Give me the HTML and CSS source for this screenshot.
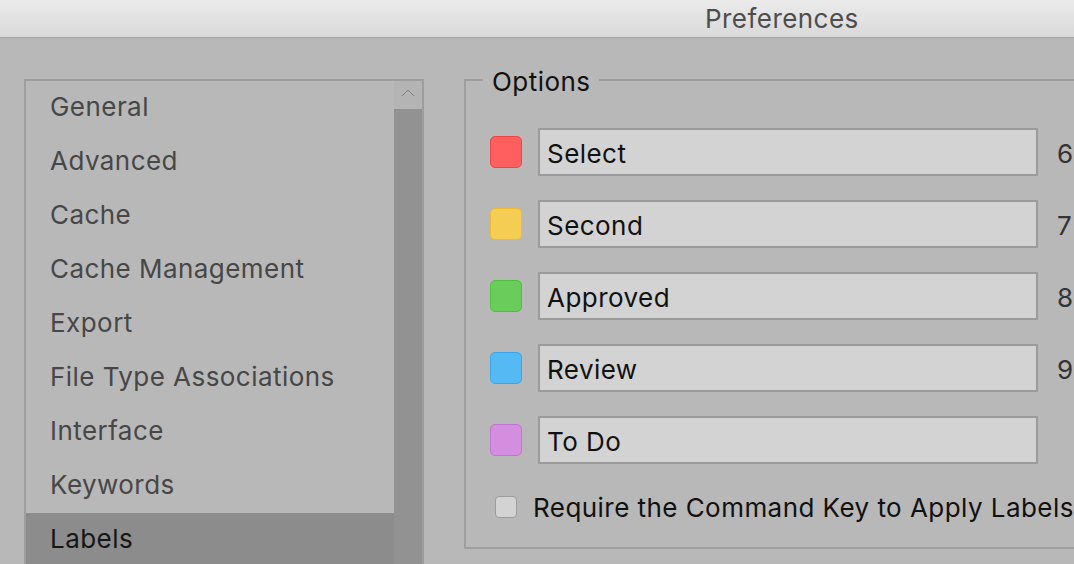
FILE: index.html
```html
<!DOCTYPE html>
<html>
<head>
<meta charset="utf-8">
<title>Preferences</title>
<link rel="stylesheet" href="styles.css">
</head>
<body>
<div class="window">
  <div class="titlebar"><span class="title">Preferences</span></div>
  <div class="content">
    <div class="listbox">
      <ul class="list">
        <li>General</li>
        <li>Advanced</li>
        <li>Cache</li>
        <li>Cache Management</li>
        <li>Export</li>
        <li>File Type Associations</li>
        <li>Interface</li>
        <li>Keywords</li>
        <li class="selected">Labels</li>
      </ul>
      <div class="scrollbar">
        <div class="scroll-up">
          <svg width="14" height="8" viewBox="0 0 14 8"><path d="M1 7 L7 1 L13 7" fill="none" stroke="#7a7a7a" stroke-width="1"/></svg>
        </div>
        <div class="scroll-track"></div>
      </div>
    </div>
    <fieldset class="options">
      <legend>Options</legend>
      <div class="rows">
        <div class="row">
          <span class="swatch red"></span>
          <div class="field">Select</div>
          <span class="key">6</span>
        </div>
        <div class="row">
          <span class="swatch yellow"></span>
          <div class="field">Second</div>
          <span class="key">7</span>
        </div>
        <div class="row">
          <span class="swatch green"></span>
          <div class="field">Approved</div>
          <span class="key">8</span>
        </div>
        <div class="row">
          <span class="swatch blue"></span>
          <div class="field">Review</div>
          <span class="key">9</span>
        </div>
        <div class="row">
          <span class="swatch purple"></span>
          <div class="field">To Do</div>
          <span class="key"></span>
        </div>
        <div class="check-row">
          <span class="checkbox"></span>
          <span class="check-label">Require the Command Key to Apply Labels</span>
        </div>
      </div>
    </fieldset>
  </div>
</div>
</body>
</html>
```

FILE: styles.css
```css
html, body {
  margin: 0;
  padding: 0;
}
body {
  width: 1074px;
  height: 564px;
  overflow: hidden;
  background: #b8b8b8;
  font-family: Inter, "Noto Sans", sans-serif;
  font-size: 26px;
  letter-spacing: 0.45px;
}
.window {
  width: 1074px;
  height: 564px;
  overflow: hidden;
}
.titlebar {
  height: 37px;
  background: linear-gradient(#ebebeb, #d9d9d9);
  border-bottom: 1px solid #a6a6a6;
  display: flex;
  align-items: center;
  padding-left: 705px;
  white-space: nowrap;
}
.title {
  color: #4d4d4d;
  font-size: 26px;
  line-height: 30px;
}
.content {
  display: flex;
  align-items: flex-start;
  padding: 41px 0 0 24px;
  gap: 40px;
}
.listbox {
  width: 396px;
  height: 500px;
  flex: none;
  border: 2px solid #9e9e9e;
  border-bottom: none;
  display: flex;
}
.list {
  list-style: none;
  margin: 0;
  padding: 0;
  flex: 1;
}
.list li {
  height: 54px;
  line-height: 52px;
  padding-left: 24px;
  color: #474747;
  white-space: nowrap;
}
.list li.selected {
  background: #8c8c8c;
  color: #161616;
}
.scrollbar {
  width: 28px;
  display: flex;
  flex-direction: column;
}
.scroll-up {
  height: 28px;
  background: #b4b4b4;
  display: flex;
  justify-content: center;
  padding-top: 8px;
  box-sizing: border-box;
}
.scroll-up svg {
  display: block;
}
.scroll-track {
  flex: 1;
  background: #929292;
}
.options {
  flex: none;
  width: 700px;
  margin: 0;
  padding: 0;
  border: 2px solid #9e9e9e;
  border-right: none;
  min-width: 0;
  position: relative;
  top: -14px;
}
.options legend {
  margin-left: 17px;
  padding: 0 9px;
  color: #111;
  line-height: 30px;
  position: relative;
  top: 2px;
}
.rows {
  padding: 33px 0 28px 24px;
  display: flex;
  flex-direction: column;
  gap: 24px;
}
.row {
  display: flex;
  align-items: center;
  height: 48px;
}
.swatch {
  width: 32px;
  height: 32px;
  box-sizing: border-box;
  border-radius: 5px;
  border: 1px solid;
  flex: none;
}
.red { background: #ff5f5f; border-color: #e94646; }
.yellow { background: #f5cd52; border-color: #ebbb34; }
.green { background: #6acc5a; border-color: #4fbf3f; }
.blue { background: #55baf3; border-color: #3aa7ea; }
.purple { background: #d48ee0; border-color: #c275d5; }
.field {
  margin-left: 16px;
  width: 500px;
  height: 48px;
  box-sizing: border-box;
  border: 2px solid #9b9b9b;
  background: #d3d3d3;
  color: #111;
  padding: 2px 0 0 7px;
  line-height: 44px;
  flex: none;
}
.key {
  margin-left: 19px;
  padding-top: 3px;
  color: #333;
}
.check-row {
  display: flex;
  align-items: center;
  height: 24px;
  margin-top: 7px;
  white-space: nowrap;
  padding-left: 5px;
}
.checkbox {
  width: 22px;
  height: 22px;
  box-sizing: border-box;
  border: 1px solid #9c9c9c;
  border-radius: 4px;
  background: #d3d3d3;
  flex: none;
}
.check-label {
  margin-left: 16px;
  color: #111;
}
```
